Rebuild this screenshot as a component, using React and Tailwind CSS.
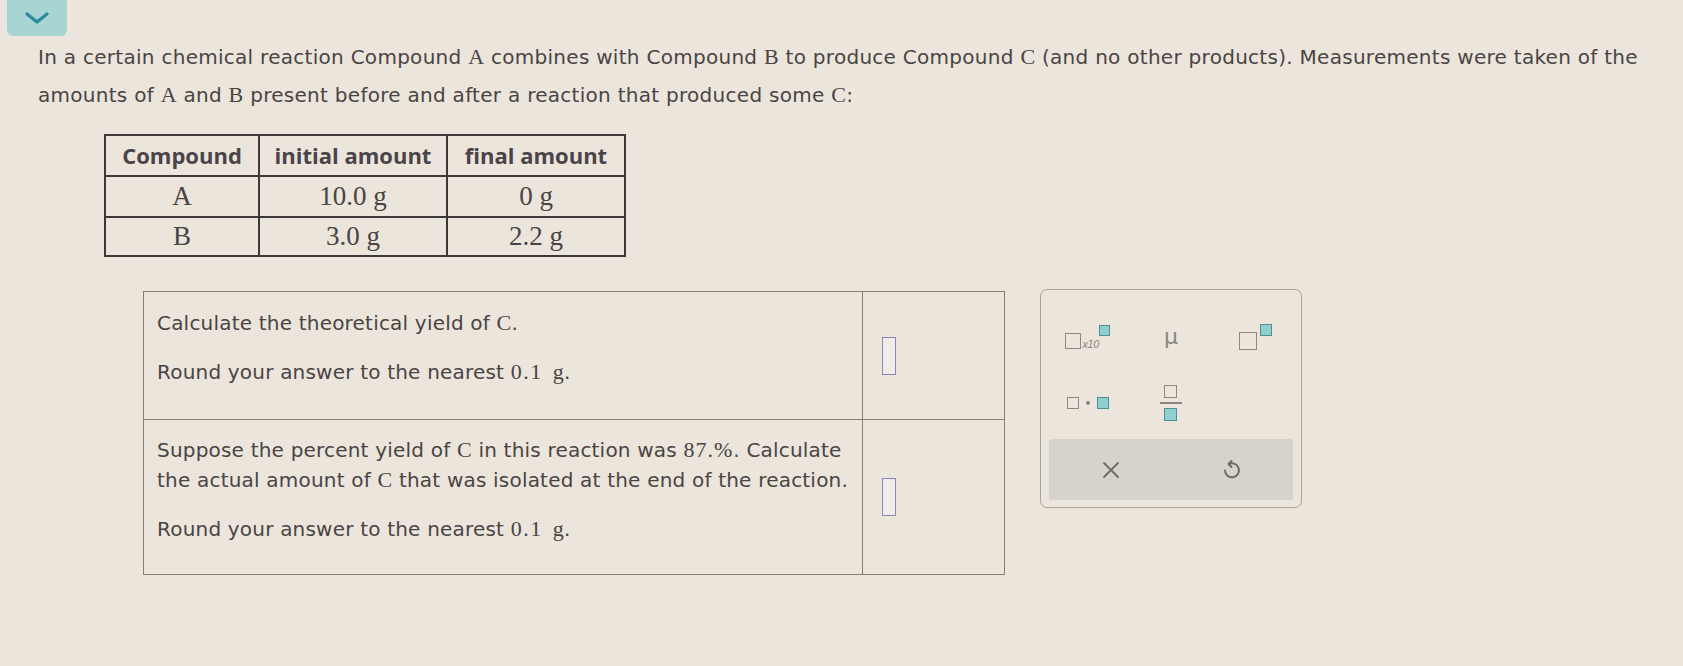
import React from "react";

function GraySq({ cls }) {
  return <div className={`border-[1.5px] border-[#8d8883] ${cls}`} />;
}
function TealSq({ cls }) {
  return <div className={`border-[1.5px] border-[#4f8f96] bg-[#8fcfd0] ${cls}`} />;
}

function AnswerBox() {
  return <div className="ml-[19px] w-[14px] h-[38px] border-[1.5px] border-[#8b82c8] bg-[#f1ede6]" />;
}

function S({ children }) {
  return <span className="font-['Liberation_Serif',serif] text-[22px]">{children}</span>;
}

function Tenth() {
  return (
    <span className="font-['Liberation_Serif',serif] text-[22px]">
      <span className="tracking-[1.5px]">0.1</span>
      <span className="ml-[10px]">g</span>
    </span>
  );
}

export default function App() {
  return (
    <div className="w-full h-[666px] bg-[#ebe5db] text-[#4a4444] overflow-hidden font-['DejaVu_Sans',Verdana,sans-serif]">
      <div className="ml-[7px] w-[60px] h-[36px] bg-[#a8d5d3] rounded-b-[6px] flex items-center justify-center">
        <svg width="26" height="14" viewBox="0 0 26 14">
          <path d="M3 3 L13 11 L23 3" fill="none" stroke="#2b8d9b" strokeWidth="3.4" strokeLinecap="round" strokeLinejoin="round" />
        </svg>
      </div>

      <p className="mt-[2px] pl-[38px] pr-[10px] text-[20px] leading-[38px] tracking-[0.28px] whitespace-nowrap">
        In a certain chemical reaction Compound <S>A</S> combines with Compound <S>B</S> to produce Compound <S>C</S> (and no other products). Measurements were taken of the
        <br />
        amounts of <S>A</S> and <S>B</S> present before and after a reaction that produced some <S>C</S>:
      </p>

      <table className="mt-[20px] ml-[104px] border-collapse border-2 border-[#3d3838]">
        <thead>
          <tr className="h-[41px] font-['Open_Sans',sans-serif] font-bold text-[22px] text-[#4a4448]">
            <th className="w-[154px] border-2 border-[#3d3838] px-1 font-bold">Compound</th>
            <th className="w-[188px] border-2 border-[#3d3838] px-1 font-bold">initial amount</th>
            <th className="w-[178px] border-2 border-[#3d3838] px-1 font-bold">final amount</th>
          </tr>
        </thead>
        <tbody className="font-['Liberation_Serif',serif] text-[27px] text-center text-[#4a4444]">
          <tr className="h-[41px]">
            <td className="border-2 border-[#3d3838] leading-none">A</td>
            <td className="border-2 border-[#3d3838] leading-none">10.0 g</td>
            <td className="border-2 border-[#3d3838] leading-none">0 g</td>
          </tr>
          <tr className="h-[39px]">
            <td className="border-2 border-[#3d3838] leading-none">B</td>
            <td className="border-2 border-[#3d3838] leading-none">3.0 g</td>
            <td className="border-2 border-[#3d3838] leading-none">2.2 g</td>
          </tr>
        </tbody>
      </table>

      <div className="mt-[32px] ml-[143px] flex items-start gap-[35px]">
        <div className="w-[862px] border-[1.5px] border-[#8c7b72] mt-[2px]">
          <div className="flex h-[128px] border-b-[1.5px] border-[#8c7b72]">
            <div className="w-[719px] border-r-[1.5px] border-[#8c7b72] pl-[13px] pt-[16px] text-[20px] leading-[30px] tracking-[0.2px] whitespace-nowrap">
              <p>Calculate the theoretical yield of <S>C</S>.</p>
              <p className="mt-[19px]">Round your answer to the nearest <Tenth />.</p>
            </div>
            <div className="flex-1 flex items-center">
              <AnswerBox />
            </div>
          </div>
          <div className="flex h-[154px]">
            <div className="w-[719px] border-r-[1.5px] border-[#8c7b72] pl-[13px] pt-[15px] text-[20px] leading-[30px] tracking-[0.2px] whitespace-nowrap">
              <p>
                Suppose the percent yield of <S>C</S> in this reaction was <span className="font-['Liberation_Serif',serif] text-[22px] tracking-[1px]">87.%</span>. Calculate
                <br />
                the actual amount of <S>C</S> that was isolated at the end of the reaction.
              </p>
              <p className="mt-[19px]">Round your answer to the nearest <Tenth />.</p>
            </div>
            <div className="flex-1 flex items-center">
              <AnswerBox />
            </div>
          </div>
        </div>

        <div className="w-[262px] h-[219px] border-[1.5px] border-[#aaa49d] rounded-[7px] flex flex-col px-[8px] pb-[7px]">
          <div className="h-[81px] pt-[30px]">
            <div className="grid grid-cols-3 h-[34px] items-center">
              <div className="flex items-end justify-center pr-[4px]">
                <GraySq cls="w-[16px] h-[16px]" />
                <span className="text-[10px] italic text-[#8a8580] ml-[1px] leading-none mb-[-1px] tracking-[-0.6px]">x10</span>
                <TealSq cls="w-[11px] h-[11px] mb-[13px]" />
              </div>
              <div className="flex justify-center text-[22px] text-[#8a8580] leading-none">μ</div>
              <div className="flex items-end justify-center pl-[6px]">
                <GraySq cls="w-[18px] h-[18px]" />
                <TealSq cls="w-[12px] h-[12px] mb-[14px] ml-[3px]" />
              </div>
            </div>
          </div>
          <div className="grid grid-cols-3 h-[64px] items-center">
            <div className="flex items-center justify-center gap-[7px] pr-[4px]">
              <GraySq cls="w-[12px] h-[12px]" />
              <div className="w-[4px] h-[4px] rounded-full bg-[#8a8580]" />
              <TealSq cls="w-[12px] h-[12px]" />
            </div>
            <div className="flex flex-col items-center justify-center gap-[4px]">
              <GraySq cls="w-[13px] h-[13px]" />
              <div className="w-[22px] h-[1.5px] bg-[#8a8580]" />
              <TealSq cls="w-[13px] h-[13px]" />
            </div>
            <div />
          </div>
          <div className="mt-[4px] flex-1 bg-[#d6d3cd] rounded-[3px] grid grid-cols-2 items-center">
            <div className="flex justify-center pl-[2px]">
              <svg width="22" height="22" viewBox="0 0 22 22">
                <path d="M4 4 L18 18 M18 4 L4 18" stroke="#6e6a66" strokeWidth="1.8" strokeLinecap="round" />
              </svg>
            </div>
            <div className="flex justify-center pr-[2px]">
              <svg width="22" height="22" viewBox="0 0 22 22">
                <path d="M9 5 A7 7 0 1 1 5 11.5" fill="none" stroke="#6e6a66" strokeWidth="2" strokeLinecap="round" />
                <path d="M11.5 2 L8.5 5 L11.5 8" fill="none" stroke="#6e6a66" strokeWidth="2" strokeLinecap="round" strokeLinejoin="round" />
              </svg>
            </div>
          </div>
        </div>
      </div>
    </div>
  );
}
